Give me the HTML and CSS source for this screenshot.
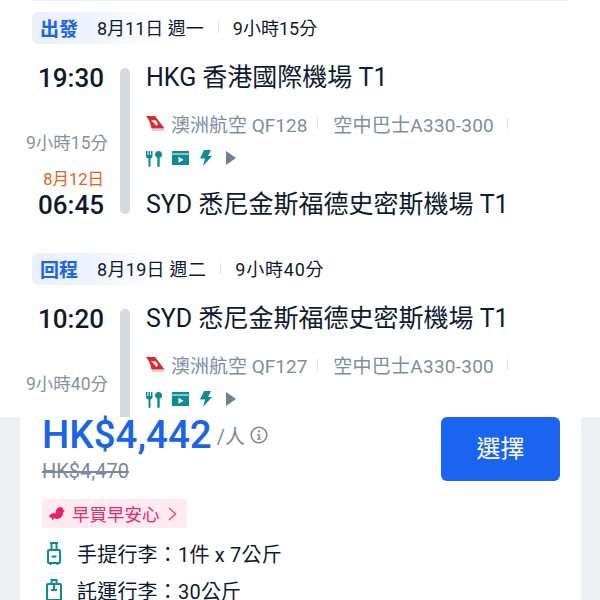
FILE: index.html
```html
<!DOCTYPE html>
<html lang="zh-Hant">
<head>
    <meta charset="UTF-8">
    <meta name="viewport" content="width=device-width, initial-scale=1.0">
    <title>航班詳情</title>
    <link rel="stylesheet" href="styles.css">
</head>
<body>
    <div class="details">
        <div class="top-line"></div>

        <div class="seg-head">
            <span class="seg-tag">出發</span>
            <span class="seg-date">8月11日 週一</span>
            <span class="seg-div"></span>
            <span class="seg-dur">9小時15分</span>
        </div>
        <div class="leg">
            <div class="times">
                <div class="time">19:30</div>
                <div class="dur">9小時15分</div>
                <div class="arrive">
                    <div class="next-day">8月12日</div>
                    <div class="time">06:45</div>
                </div>
            </div>
            <div class="bar"></div>
            <div class="info">
                <div class="airport">HKG 香港國際機場 T1</div>
                <div class="flight">
                    <svg class="airline" viewBox="0 0 20 16"><path d="M1 1H10L19.500 13.500H6.500Q5.500 6.500 1 1Z" fill="#e0252b"/><path d="M6 5L11 5.500L13 9L11.500 11L9.500 8.500Z" fill="#fff"/><path d="M7 15H19" stroke="#aaa" stroke-width="1"/></svg>
                    <span class="carrier">澳洲航空 QF128</span>
                    <span class="fl-div"></span>
                    <span class="plane">空中巴士A330-300</span>
                    <span class="fl-div"></span>
                </div>
                <div class="amenities">
                    <svg viewBox="0 0 16 17" class="am-meal"><path d="M0 1h1.500v4h1V1h1.500v4h1V1h1.500v5q0 2-2 2.500V16q0 1-1 1t-1-1V8.500q-2.500-.5-2.500-2.500z M12.500 1a3.500 3.500 0 0 1 1.200 6.800V16q0 1-1.200 1t-1.200-1V7.800A3.500 3.500 0 0 1 12.500 1z" fill="#0f8b94"/></svg>
                    <svg viewBox="0 0 17 14" class="am-tv"><path d="M0 0h17v2.500H0z M0 3.500h17V14H0z" fill="#0f8b94"/><path d="M6.500 5.800v6l5-3z" fill="#fff"/></svg>
                    <svg viewBox="0 0 13 16" class="am-power"><path d="M5 0h7L9 6h4L4 16l2-7.500H1z" fill="#0f8b94"/></svg>
                    <svg viewBox="0 0 10 14" class="am-more"><path d="M0 0l10 7-10 7z" fill="#6f7f96"/></svg>
                </div>
                <div class="airport">SYD 悉尼金斯福德史密斯機場 T1</div>
            </div>
        </div>

        <div class="seg-head seg-back">
            <span class="seg-tag">回程</span>
            <span class="seg-date">8月19日 週二</span>
            <span class="seg-div"></span>
            <span class="seg-dur">9小時40分</span>
        </div>
        <div class="leg">
            <div class="times">
                <div class="time">10:20</div>
                <div class="dur">9小時40分</div>
            </div>
            <div class="bar"></div>
            <div class="info">
                <div class="airport">SYD 悉尼金斯福德史密斯機場 T1</div>
                <div class="flight">
                    <svg class="airline" viewBox="0 0 20 16"><path d="M1 1H10L19.500 13.500H6.500Q5.500 6.500 1 1Z" fill="#e0252b"/><path d="M6 5L11 5.500L13 9L11.500 11L9.500 8.500Z" fill="#fff"/><path d="M7 15H19" stroke="#aaa" stroke-width="1"/></svg>
                    <span class="carrier">澳洲航空 QF127</span>
                    <span class="fl-div"></span>
                    <span class="plane">空中巴士A330-300</span>
                    <span class="fl-div"></span>
                </div>
                <div class="amenities">
                    <svg viewBox="0 0 16 17" class="am-meal"><path d="M0 1h1.500v4h1V1h1.500v4h1V1h1.500v5q0 2-2 2.500V16q0 1-1 1t-1-1V8.500q-2.500-.5-2.500-2.500z M12.500 1a3.500 3.500 0 0 1 1.200 6.800V16q0 1-1.200 1t-1.200-1V7.800A3.500 3.500 0 0 1 12.500 1z" fill="#0f8b94"/></svg>
                    <svg viewBox="0 0 17 14" class="am-tv"><path d="M0 0h17v2.500H0z M0 3.500h17V14H0z" fill="#0f8b94"/><path d="M6.500 5.800v6l5-3z" fill="#fff"/></svg>
                    <svg viewBox="0 0 13 16" class="am-power"><path d="M5 0h7L9 6h4L4 16l2-7.500H1z" fill="#0f8b94"/></svg>
                    <svg viewBox="0 0 10 14" class="am-more"><path d="M0 0l10 7-10 7z" fill="#6f7f96"/></svg>
                </div>
            </div>
        </div>
    </div>

    <div class="footer">
        <div class="sheet">
            <div class="price-row">
                <div class="price-left">
                    <div class="price-line">
                        <span class="price">HK$4,442</span>
                        <span class="per">/人</span>
                        <svg class="info-icon" viewBox="0 0 18 18"><circle cx="9" cy="9" r="7.800" fill="none" stroke="#7d8896" stroke-width="1.600"/><circle cx="9" cy="5.400" r="1.100" fill="#7d8896"/><path d="M7 8h2.800v4.500H11v1.200H7v-1.200h1.300V9.200H7z" fill="#7d8896"/></svg>
                    </div>
                    <div class="old-price">HK$4,470</div>
                </div>
                <button class="btn-select">選擇</button>
            </div>
            <div class="promo">
                <svg class="bird" viewBox="0 0 16 15"><path d="M0 10Q3 6 6.500 7.500Q6.500 2 11 1Q14 1 14.200 4L16 5L14.200 6Q14 12 8.500 13Q6.500 13 5.500 12L3 14.500L3 12Q1 12 0 10Z" fill="#f01d6b"/></svg>
                <span class="promo-text">早買早安心</span>
                <svg class="chev" viewBox="0 0 9 14"><path d="M1 1l6.500 6L1 13" fill="none" stroke="#f2417f" stroke-width="1.400"/></svg>
            </div>
            <div class="bag">
                <svg class="bag-icon" viewBox="0 0 16 23"><path d="M4 1H12 M5.500 1V8 M10.500 1V8" fill="none" stroke="#0f8b94" stroke-width="2"/><rect x="2" y="8" width="12" height="13" rx="1" fill="none" stroke="#0f8b94" stroke-width="2"/><path d="M5.500 14.500H10.500" stroke="#0f8b94" stroke-width="2"/><path d="M4.500 21v2 M11.500 21v2" stroke="#0f8b94" stroke-width="2"/></svg>
                <span>手提行李：1件 x 7公斤</span>
            </div>
            <div class="bag bag-last">
                <svg class="bag-icon" viewBox="0 0 16 23"><path d="M4.500 1H11.500 M5.500 1V5 M10.500 1V5" fill="none" stroke="#0f8b94" stroke-width="2"/><rect x="1" y="5" width="14" height="16" rx="1" fill="none" stroke="#0f8b94" stroke-width="2"/><path d="M8 5V11 M5 11H11" stroke="#0f8b94" stroke-width="2"/><path d="M4 21v2 M12 21v2" stroke="#0f8b94" stroke-width="2"/></svg>
                <span>託運行李：30公斤</span>
            </div>
        </div>
    </div>
</body>
</html>
```

FILE: styles.css
```css
html, body { margin: 0; padding: 0; }
body {
    width: 600px;
    height: 600px;
    overflow: hidden;
    background-color: #fff;
    font-family: Roboto, "Noto Sans CJK TC", sans-serif;
    color: #0f1a2e;
}

.details { height: 417px; overflow: hidden; padding: 0 32px; box-sizing: border-box; }
.top-line { height: 1px; background-color: #eceef1; }

.seg-head {
    display: flex;
    align-items: center;
    box-sizing: border-box;
    height: 32px;
    margin-top: 11px;
    padding: 0 0 2px 8px;
    border-radius: 6px;
    background: linear-gradient(90deg, #e9f0fe 0, #eef3fe 60px, #fff 130px);
    font-size: 18px;
}
.seg-back { margin-top: 39px; }
.seg-back .seg-date { letter-spacing: 0.3px; }
.seg-back .seg-dur { letter-spacing: 0.8px; }
.seg-tag { width: 57px; font-size: 19px; font-weight: 700; color: #1a64e8; }
.seg-div { width: 1px; height: 11px; margin: 0 14px; background-color: #dfe3e8; }

.leg { display: flex; margin-top: 24px; }
.times {
    display: flex;
    flex-direction: column;
    align-items: flex-end;
    flex: none;
    width: 72px;
    height: 146px;
}
.time { font-size: 26px; line-height: 20px; font-weight: 500; }
.dur { margin-top: 45px; margin-right: -4px; font-size: 17.500px; line-height: 20px; color: #8592a3; white-space: nowrap; }
.arrive { margin-top: 17px; text-align: right; }
.next-day { font-size: 16.500px; line-height: 20px; color: #e2621b; margin-bottom: 5px; }

.bar { width: 10px; height: 146px; margin: 0 16px; border-radius: 5px; background-color: #d5dae3; flex: none; }

.info { flex: 1; min-width: 0; padding-top: 1px; }
.airport { font-size: 25px; line-height: 18px; white-space: nowrap; }
.flight { display: flex; align-items: center; height: 20px; margin-top: 26px; font-size: 19px; color: #7f8da0; white-space: nowrap; }
.airline { width: 20px; height: 16px; margin-right: 6px; margin-left: -1px; }
.fl-div { width: 1px; height: 11px; margin: 0 15px 0 10px; background-color: #dfe3e8; }
.plane { letter-spacing: 0.25px; margin-right: 3px; }
.amenities { display: flex; align-items: center; gap: 10px; height: 16px; margin-top: 17px; margin-bottom: 30px; }
.am-meal { width: 16px; height: 17px; }
.am-tv { width: 17px; height: 14px; }
.am-power { width: 13px; height: 16px; margin-right: 4px; }
.am-more { width: 10px; height: 14px; }

.footer { display: flex; height: 183px; padding: 0 19px 0 20px; background-color: #eef0f4; }
.sheet { flex: 1; padding: 0 21px 0 22px; background-color: #fff; }
.price-row { display: flex; justify-content: space-between; align-items: flex-start; }
.price-line { display: flex; align-items: center; height: 36px; }
.price { font-size: 38.500px; line-height: 36px; font-weight: 500; color: #1a64e8; }
.per { margin-left: 5px; font-size: 20px; color: #7d8896; }
.info-icon { width: 18px; height: 18px; margin-left: 5px; }
.old-price { margin-top: 6px; font-size: 20px; line-height: 24px; color: #7d8896; text-decoration: line-through; }
.btn-select {
    width: 119px;
    height: 64px;
    padding: 0 0 6px;
    border: none;
    border-radius: 6px;
    background-color: #1a64f0;
    color: #fff;
    font-family: inherit;
    font-size: 24px;
}

.promo {
    display: flex;
    align-items: center;
    width: fit-content;
    height: 29px;
    margin-top: 16px;
    padding: 0 10px 0 7px;
    border-radius: 2px;
    background-color: #fdebf1;
    color: #e82a6c;
    font-size: 17.500px;
}
.bird { width: 16px; height: 15px; margin-right: 7px; }
.chev { width: 9px; height: 14px; margin-left: 8px; }

.bag { display: flex; align-items: center; height: 20px; margin-top: 15px; font-size: 20px; letter-spacing: 0.2px; }
.bag-last { margin-top: 17px; }
.bag-icon { width: 16px; height: 23px; margin-left: 4px; margin-right: 15px; flex: none; }
```
